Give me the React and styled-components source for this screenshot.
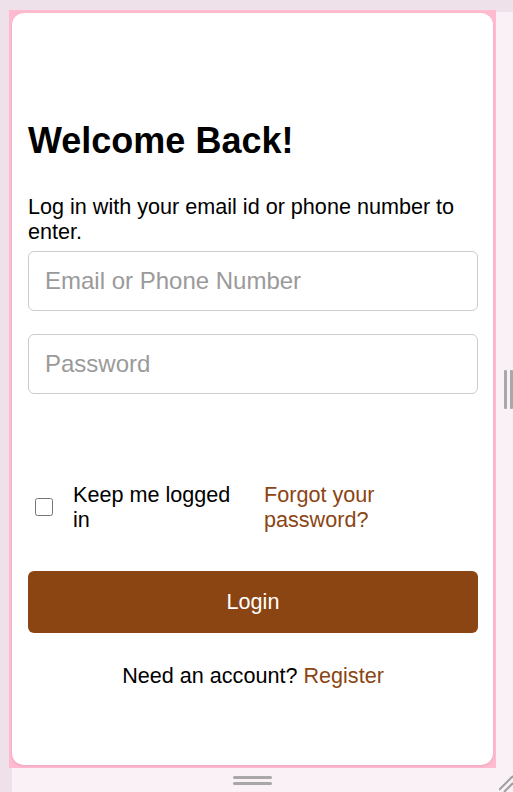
import React from "react";
import styled, { createGlobalStyle } from "styled-components";

const Global = createGlobalStyle`
  html, body { margin: 0; padding: 0; }
  body {
    font-family: "Liberation Sans", Arial, sans-serif;
    background:
      linear-gradient(#efe1e9, #efe1e9) top left / 100% 12px no-repeat,
      linear-gradient(#efe1e9, #efe1e9) top left / 12px 100% no-repeat,
      #f9f1f6;
    min-height: 792px;
    overflow: hidden;
  }
`;

const Layout = styled.div`
  display: grid;
  grid-template-columns: 487px 1fr;
  grid-template-rows: 758px 24px;
  padding: 10px 0 0 9px;
  height: 792px;
  box-sizing: border-box;
`;

const Frame = styled.div`
  background: #ffbcd1;
  padding: 3px;
  display: flex;
`;

const Card = styled.div`
  flex: 1;
  background: #fff;
  border-radius: 12px;
  box-shadow: 0 1px 3px rgba(180, 90, 120, 0.25);
  padding: 107px 15px 0 16px;
  display: flex;
  flex-direction: column;
  color: #000;
`;

const Title = styled.h1`
  margin: 0 0 32px;
  font-size: 36px;
  font-weight: 700;
  line-height: normal;
`;

const Subtitle = styled.p`
  margin: 0 0 7px;
  font-size: 21.6px;
  line-height: 25px;
`;

const Field = styled.input`
  box-sizing: border-box;
  width: 100%;
  height: 60px;
  margin: 0 0 ${(p) => p.$gap}px;
  padding: 0 16px;
  border: 1px solid #cccccc;
  border-radius: 6px;
  font-family: inherit;
  font-size: 24px;
  color: #000;
  outline: none;
  &::placeholder { color: #9a9a9a; }
`;

const OptionsRow = styled.div`
  display: grid;
  grid-template-columns: 18px 171px 1fr;
  column-gap: 20px;
  align-items: center;
  padding-left: 7px;
  margin-bottom: 39px;
`;

const Check = styled.input`
  width: 18px;
  height: 18px;
  margin: 0;
`;

const CheckLabel = styled.label`
  font-size: 21.6px;
  line-height: 25px;
`;

const Link = styled.a`
  color: #8b4513;
  text-decoration: none;
  font-size: 21.6px;
  line-height: 25px;
`;

const LoginButton = styled.button`
  height: 62px;
  width: 100%;
  border: none;
  border-radius: 6px;
  background: #8b4513;
  color: #fff;
  font-family: inherit;
  font-size: 21.6px;
  margin-bottom: 30px;
`;

const Footer = styled.p`
  margin: 0;
  text-align: center;
  font-size: 21.6px;
  line-height: 25px;
`;

const SideGutter = styled.div`
  display: flex;
  align-items: center;
  gap: 3px;
  padding-left: 8px;
`;

const VBar = styled.span`
  width: 3px;
  height: 39px;
  background: #a8a8a8;
  border-radius: 1px;
`;

const BottomGutter = styled.div`
  display: flex;
  flex-direction: column;
  align-items: center;
  gap: 3px;
  padding-top: 8px;
`;

const HBar = styled.span`
  width: 39px;
  height: 3px;
  background: #a8a8a8;
  border-radius: 2px;
`;

const Corner = styled.div`
  display: flex;
  align-items: flex-end;
  justify-content: flex-end;
`;

export default function App() {
  return (
    <>
      <Global />
      <Layout>
        <Frame>
          <Card>
            <Title>Welcome Back!</Title>
            <Subtitle>Log in with your email id or phone number to enter.</Subtitle>
            <Field $gap={23} type="text" placeholder="Email or Phone Number" />
            <Field $gap={88} type="password" placeholder="Password" />
            <OptionsRow>
              <Check type="checkbox" id="keep" />
              <CheckLabel htmlFor="keep">Keep me logged in</CheckLabel>
              <Link href="#">Forgot your password?</Link>
            </OptionsRow>
            <LoginButton>Login</LoginButton>
            <Footer>
              Need an account? <Link href="#">Register</Link>
            </Footer>
          </Card>
        </Frame>
        <SideGutter>
          <VBar />
          <VBar />
        </SideGutter>
        <BottomGutter>
          <HBar />
          <HBar />
        </BottomGutter>
        <Corner>
          <svg width="14" height="19" viewBox="0 0 14 19">
            <line x1="0" y1="17" x2="14" y2="3" stroke="#a0a0a0" strokeWidth="2" />
            <line x1="5" y1="19" x2="14" y2="10" stroke="#a0a0a0" strokeWidth="2" />
          </svg>
        </Corner>
      </Layout>
    </>
  );
}
